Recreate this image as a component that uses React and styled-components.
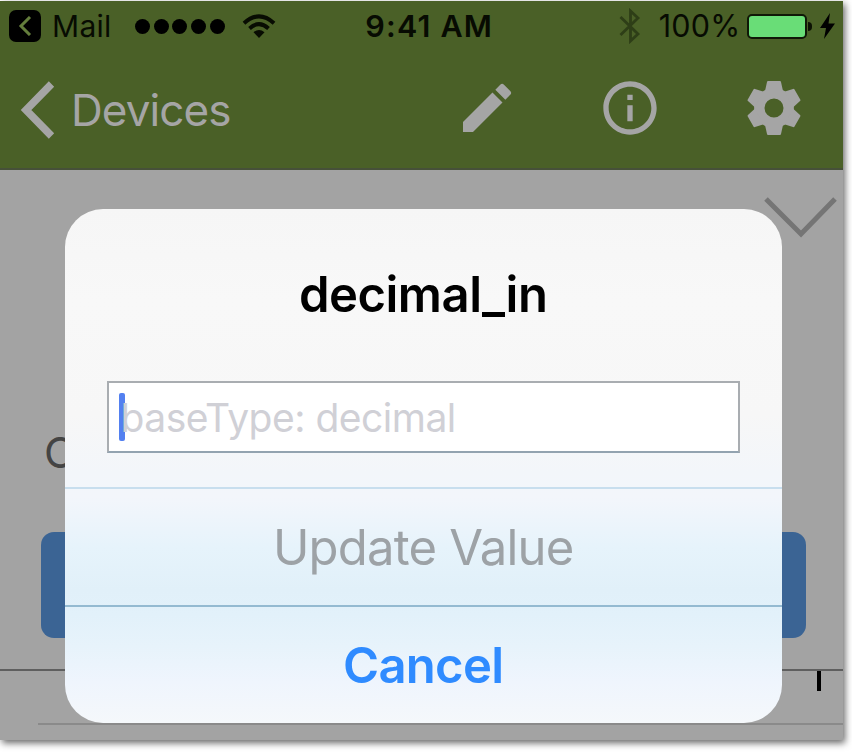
import React from "react";
import styled, { createGlobalStyle, css } from "styled-components";
import { MdEdit, MdInfoOutline } from "react-icons/md";

const GlobalStyle = createGlobalStyle`
  * { box-sizing: border-box; }
  body {
    margin: 0;
    background: #fff;
    font-family: Inter, "Liberation Sans", sans-serif;
  }
`;

const Page = styled.div`
  height: 752px;
  padding-top: 1px;
  overflow: hidden;
  background: #fff;
`;

const Screen = styled.main`
  position: relative;
  display: flex;
  flex-direction: column;
  width: 842.5px;
  height: 739px;
  background: #a3a3a3;
  box-shadow: 2px 3px 7px 0 rgba(0, 0, 0, 0.6);
`;

const Header = styled.header`
  flex: none;
  height: 169.3px;
  background: #4a6027;
  border-bottom: 2px solid #465038;
`;

const StatusBar = styled.div`
  display: flex;
  align-items: center;
  height: 50px;
  padding-left: 9px;
  color: #070b02;
`;

const StatusText = styled.span`
  font-size: ${(p) => p.$size}px;
  font-weight: ${(p) => p.$weight || 400};
  letter-spacing: ${(p) => p.$spacing || 0}px;
  line-height: 50px;
  white-space: nowrap;
  width: ${(p) => p.$width}px;
  margin-left: ${(p) => p.$gap}px;
`;

const BackBadge = styled.div`
  display: grid;
  place-items: center;
  width: 32px;
  height: 32px;
  border-radius: 7px;
  background: #000;
`;

const Signal = styled.div`
  display: flex;
  gap: 3.7px;
  margin-left: 22px;
`;

const Dot = styled.i`
  width: 15px;
  height: 15px;
  border-radius: 50%;
  background: #000;
`;

const StatusIcon = styled.svg`
  flex: none;
  margin-left: ${(p) => p.$gap}px;
`;

const Battery = styled.div`
  width: 60px;
  height: 25px;
  margin-left: 8px;
  border: 2px solid #101807;
  border-radius: 5px;
  background: #69dd77;
`;

const BatteryTip = styled.i`
  width: 4px;
  height: 9px;
  margin-left: 1px;
  border-radius: 0 4px 4px 0;
  background: #0c1204;
`;

const NavBar = styled.nav`
  display: flex;
  align-items: center;
  height: 118px;
  padding-left: 20px;
  color: #a5a5a5;
`;

const BackLabel = styled.span`
  width: 383.5px;
  margin-left: 16px;
  font-size: 44px;
  line-height: 60px;
  letter-spacing: ${(p) => p.$spacing}px;
`;

const NavIcon = styled.span`
  display: flex;
  flex: none;
  width: 64px;
  height: 64px;
  margin: -4px ${(p) => p.$after || 0}px 0 0;
  svg { width: 64px; height: 64px; }
`;

const Content = styled.section`
  display: flex;
  flex-direction: column;
  flex: 1;
`;

const Expander = styled.svg`
  flex: none;
  align-self: flex-end;
  margin: 23.2px 5px 0 0;
`;

const FieldLabel = styled.div`
  flex: none;
  height: 60px;
  margin: 183px 0 0 44px;
  color: #444;
  font-size: 43px;
  line-height: 60px;
`;

const BackdropButton = styled.div`
  flex: none;
  height: 106px;
  margin: 50px 37px 0 40.5px;
  border-radius: 13px;
  background: #3b6494;
`;

const ListRow = styled.div`
  display: flex;
  flex: none;
  justify-content: flex-end;
  height: 54px;
  margin-top: 30.5px;
  border-top: 2px solid #5f5f5f;
`;

const RowMark = styled.i`
  width: 4px;
  height: 20px;
  margin-right: 21.5px;
  background: #000;
`;

const RowDivider = styled.div`
  flex: none;
  height: 2px;
  margin-left: 38px;
  background: #8a8a8a;
`;

const Dialog = styled.div`
  position: absolute;
  left: 64.7px;
  top: 207.7px;
  display: flex;
  flex-direction: column;
  width: 717px;
  height: 514.5px;
  border-radius: 38px;
  overflow: hidden;
  background: linear-gradient(
    #f6f6f6 0%, #f8f8f8 18%, #f7f7f7 40%, #f3f6fa 51%, #f3f6fb 56%,
    #e6f3fb 66%, #e1f0f9 74%, #e2f1fa 79%, #e7f3fb 85%, #eff5fd 92%, #f5f8fb 100%
  );
`;

const Title = styled.h1`
  flex: none;
  height: 172px;
  margin: 0;
  padding-top: 48px;
  font-size: 49px;
  font-weight: 600;
  line-height: 76px;
  letter-spacing: ${(p) => p.$spacing}px;
  text-align: center;
  color: #000;
`;

const Field = styled.div`
  display: flex;
  flex: none;
  align-items: center;
  height: 72.5px;
  margin: 0 42px 0 42.3px;
  padding-left: 10.5px;
  border: 2px solid #a9adb1;
  border-bottom-color: #93a3b0;
  background: #fff;
`;

const Caret = styled.i`
  width: 5.5px;
  height: 48px;
  margin-right: -4.5px;
  border-radius: 2px;
  background: #5380f0;
`;

const Placeholder = styled.span`
  padding-top: 2px;
  color: #d0d0d6;
  font-size: 39px;
  line-height: 60px;
  letter-spacing: ${(p) => p.$spacing}px;
`;

const primary = css`
  color: #2f8bff;
  font-weight: 600;
  border-top-color: #94bad1;
`;

const Action = styled.button`
  flex: none;
  width: 100%;
  height: 118px;
  margin-top: ${(p) => p.$gap || 0}px;
  padding: 0;
  border: 0;
  border-top: 2px solid #c8deee;
  background: none;
  color: #9da2a6;
  font: 400 49px/1 Inter, "Liberation Sans", sans-serif;
  letter-spacing: ${(p) => p.$spacing}px;
  ${(p) => p.$primary && primary}
`;

function Gear() {
  return (
    <svg viewBox="-32 -32 64 64" fill="currentColor">
      <circle r="14.7" fill="none" stroke="currentColor" strokeWidth="10.4" />
      {[0, 60, 120, 180, 240, 300].map((angle) => (
        <path
          key={angle}
          transform={`rotate(${angle})`}
          d="M-6-27H6q.800 0 1 1L9-17H-9L-7-26q.200-1 1-1z"
        />
      ))}
    </svg>
  );
}

export default function App() {
  return (
    <Page>
      <GlobalStyle />
      <Screen>
        <Header>
          <StatusBar>
            <BackBadge>
              <svg width="14" height="20" viewBox="0 0 14 20" fill="none" stroke="#647e3c" strokeWidth="3">
                <path d="M12 1 3 10l9 9" />
              </svg>
            </BackBadge>
            <StatusText $size={30} $gap={11} $width={61} $spacing={0.3}>Mail</StatusText>
            <Signal>
              <Dot /><Dot /><Dot /><Dot /><Dot />
            </Signal>
            <StatusIcon $gap={17} width="34" height="24" viewBox="0 0 34 24">
              <g fill="none" stroke="#080c02" strokeWidth="4">
                <path d="M2 9.2Q17-4.4 32 9.2" />
                <path d="M7.5 14.4q9.500-8.500 19 0" />
              </g>
              <path d="M11.500 18.200q5.500-4.600 11 0L17 24z" fill="#080c02" />
            </StatusIcon>
            <StatusText $size={30.5} $weight={600} $gap={89.5} $width={132} $spacing={1.2}>9:41 AM</StatusText>
            <StatusIcon $gap={121.5} width="22" height="36" viewBox="0 0 22 36" fill="none" stroke="#2e3e17" strokeWidth="2.800">
              <path d="M1.500 9 19 26 11.500 33V3L19 10 1.500 27" />
            </StatusIcon>
            <StatusText $size={30.5} $gap={18} $width={80} $spacing={0.2}>100%</StatusText>
            <Battery />
            <BatteryTip />
            <StatusIcon $gap={8} width="15" height="26" viewBox="0 0 15 26" fill="#000">
              <path d="M10 0 0 15h6L4 26 15 10.500H8.500z" />
            </StatusIcon>
          </StatusBar>
          <NavBar>
            <svg width="35" height="58" viewBox="0 0 35 58" fill="none" stroke="#a5a5a5" strokeWidth="7.500">
              <path d="M31.500 3 6 29l25.500 26" />
            </svg>
            <BackLabel $spacing={-0.9}>Devices</BackLabel>
            <NavIcon $after={79.5}><MdEdit /></NavIcon>
            <NavIcon $after={79.5}><MdInfoOutline /></NavIcon>
            <NavIcon><Gear /></NavIcon>
          </NavBar>
        </Header>
        <Content>
          <Expander width="75" height="46" viewBox="0 0 75 46" fill="none" stroke="#757575" strokeWidth="5">
            <path d="M3 6l35 35L72 6" />
          </Expander>
          <FieldLabel>C</FieldLabel>
          <BackdropButton />
          <ListRow><RowMark /></ListRow>
          <RowDivider />
        </Content>
        <Dialog role="dialog">
          <Title $spacing={-0.5}>decimal_in</Title>
          <Field>
            <Caret />
            <Placeholder $spacing={-0.5}>baseType: decimal</Placeholder>
          </Field>
          <Action $gap={34} $spacing={-0.8}>Update Value</Action>
          <Action $primary $spacing={-0.7}>Cancel</Action>
        </Dialog>
      </Screen>
    </Page>
  );
}
